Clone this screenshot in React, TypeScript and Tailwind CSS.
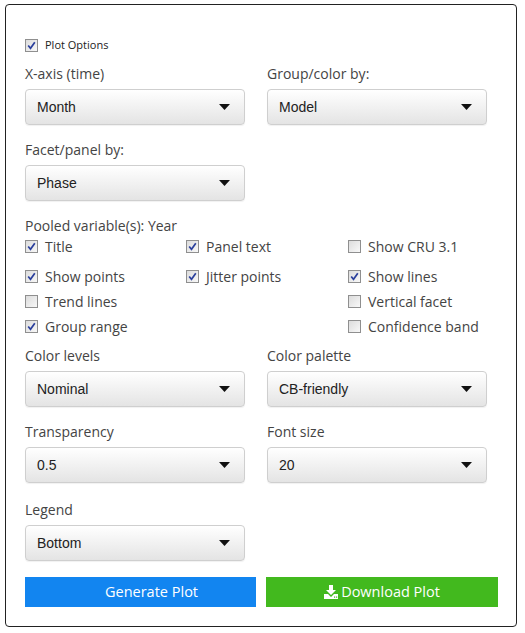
import React from 'react'

// ─── Bits ─────────────────────────────────────────────────────

function Check({ checked }: { checked: boolean }) {
  return (
    <span className="flex h-[13px] w-[13px] shrink-0 items-center justify-center border border-[#8f8f8f] bg-gradient-to-br from-[#dcdcdc] to-[#f8f8f8]">
      {checked && (
        <svg width="9" height="9" viewBox="0 0 9 9">
          <path d="M1.2 4.5 L3.5 7.3 L7.8 1.2" fill="none" stroke="#2a3f9c" strokeWidth="1.7" />
        </svg>
      )}
    </span>
  )
}

function Select({ value }: { value: string }) {
  return (
    <div className="flex h-[36px] w-[220px] items-center justify-between rounded-[4px] border border-[#cfcfcf] bg-gradient-to-b from-white to-[#e4e4e4] pl-[11px] pr-[14px] shadow-[0_1px_1px_rgba(0,0,0,0.06)] font-['Liberation_Sans',Arial,sans-serif] text-[14px] text-[#222]">
      <span>{value}</span>
      <svg width="11" height="6" viewBox="0 0 11 6">
        <path d="M0 0 L11 0 L5.5 6 Z" fill="#111" />
      </svg>
    </div>
  )
}

function Field({ label, value, className = '' }: { label: string; value: string; className?: string }) {
  return (
    <div className={className}>
      <div className="h-[20px] leading-[20px] text-[14px] text-[#444]">{label}</div>
      <div className="mt-[5px]">
        <Select value={value} />
      </div>
    </div>
  )
}

function Opt({ label, checked }: { label: string; checked: boolean }) {
  return (
    <div className="flex items-center gap-[7px]">
      <Check checked={checked} />
      <span className="text-[14px] leading-[13px] text-[#444]">{label}</span>
    </div>
  )
}

// ─── Page ─────────────────────────────────────────────────────

export default function App() {
  return (
    <div className="h-[633px] w-[525px] bg-white pl-[5px] pt-[4px] font-['Open_Sans',sans-serif]">
      <div className="h-[623px] w-[512px] rounded-[4px] border border-[#222] pl-[19px] pt-[34px]">
        {/* Plot options toggle */}
        <div className="flex h-[13px] items-center gap-[7px]">
          <Check checked />
          <span className="text-[11px] text-[#222]">Plot Options</span>
        </div>

        <div className="mt-[12px] grid grid-cols-[242px_220px]">
          <Field label="X-axis (time)" value="Month" />
          <Field label="Group/color by:" value="Model" />
        </div>

        <Field className="mt-[15px]" label="Facet/panel by:" value="Phase" />

        {/* Pooled + display options */}
        <div className="mt-[15px] h-[20px] leading-[20px] text-[14px] text-[#444]">Pooled variable(s): Year</div>
        <div className="mt-[4px] grid grid-cols-[161px_162px_1fr] grid-rows-[30px_25px_25px_25px] items-start">
          <Opt label="Title" checked />
          <Opt label="Panel text" checked />
          <Opt label="Show CRU 3.1" checked={false} />
          <Opt label="Show points" checked />
          <Opt label="Jitter points" checked />
          <Opt label="Show lines" checked />
          <Opt label="Trend lines" checked={false} />
          <div />
          <Opt label="Vertical facet" checked={false} />
          <Opt label="Group range" checked />
          <div />
          <Opt label="Confidence band" checked={false} />
        </div>

        <div className="mt-[1px] grid grid-cols-[242px_220px]">
          <Field label="Color levels" value="Nominal" />
          <Field label="Color palette" value="CB-friendly" />
        </div>

        <div className="mt-[15px] grid grid-cols-[242px_220px]">
          <Field label="Transparency" value="0.5" />
          <Field label="Font size" value="20" />
        </div>

        <Field className="mt-[17px]" label="Legend" value="Bottom" />

        {/* Actions */}
        <div className="mt-[16px] flex gap-[10px]">
          <button className="flex h-[30px] w-[231px] items-center justify-center bg-[#1285f0] pl-[22px] text-[14.5px] text-white">
            Generate Plot
          </button>
          <button className="flex h-[30px] w-[232px] items-center justify-center gap-[3px] bg-[#42b91e] text-[14.5px] text-white">
            <svg width="14" height="14" viewBox="0 0 14 14">
              <path d="M5 0 H9 V5 H12 L7 10 L2 5 H5 Z" fill="#fff" />
              <path d="M0 9 H4 L7 12 L10 9 H14 V14 H0 Z" fill="#fff" />
              <rect x="10" y="11.5" width="1.2" height="1.2" fill="#42b91e" />
              <rect x="12" y="11.5" width="1.2" height="1.2" fill="#42b91e" />
            </svg>
            Download Plot
          </button>
        </div>
      </div>
    </div>
  )
}
